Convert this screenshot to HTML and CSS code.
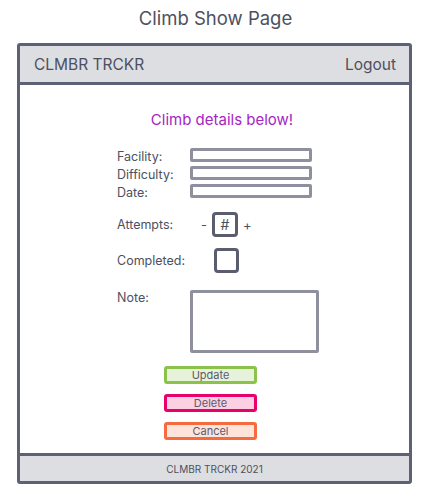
FILE: index.html
```html
<!DOCTYPE html>
<html lang="en">
  <head>
    <meta charset="UTF-8" />
    <title>Climb Show Page</title>
    <link rel="stylesheet" href="styles.css">
  </head>
  <body>
    <h1 class="page-title">Climb Show Page</h1>

    <div class="frame">
      <div class="topbar">
        <span>CLMBR TRCKR</span>
        <span>Logout</span>
      </div>

      <div class="content">
        <h2 class="intro">Climb details below!</h2>

        <div class="fields">
          <label>Facility:</label>
          <div class="input"></div>
          <label>Difficulty:</label>
          <div class="input"></div>
          <label>Date:</label>
          <div class="input"></div>
        </div>

        <div class="row attempts">
          <label>Attempts:</label>
          <div class="stepper">
            <span>-</span>
            <div class="box">#</div>
            <span>+</span>
          </div>
        </div>

        <div class="row completed">
          <label>Completed:</label>
          <div class="box check"></div>
        </div>

        <div class="row note">
          <label>Note:</label>
          <div class="textarea"></div>
        </div>

        <div class="buttons">
          <div class="btn update">Update</div>
          <div class="btn delete">Delete</div>
          <div class="btn cancel">Cancel</div>
        </div>
      </div>

      <div class="footer">CLMBR TRCKR 2021</div>
    </div>
  </body>
</html>
```

FILE: styles.css
```css
body {
  margin: 0;
  font-family: Inter, "Open Sans", sans-serif;
  color: #4d5060;
  background-color: #fff;
}
.page-title {
  margin: 7px 0 0;
  text-align: center;
  font-size: 18.5px;
  font-weight: 400;
  line-height: 23px;
}
.frame {
  margin: 13px 0 0 17px;
  width: 389px;
  height: 435px;
  border: 3px solid #5d6175;
  border-radius: 3px;
  display: flex;
  flex-direction: column;
}
.topbar {
  height: 36px;
  border-bottom: 3px solid #5d6175;
  background-color: #dddee2;
  display: flex;
  justify-content: space-between;
  align-items: center;
  padding: 0 13px 0 14px;
  font-size: 15.5px;
}
.content {
  flex: 1;
  padding-left: 97px;
}
.intro {
  margin: 25px 0 0 0;
  width: 200px;
  text-align: center;
  font-size: 15px;
  font-weight: 400;
  color: #a526c2;
  padding-left: 5px;
}
label {
  font-size: 12.5px;
}
.fields {
  margin-top: 19px;
  display: grid;
  grid-template-columns: 73px 122px;
  row-gap: 4px;
  align-items: center;
}
.fields label {
  line-height: 14px;
  position: relative;
  top: 2px;
}
.input {
  height: 8px;
  border: 3px solid #8e909e;
  border-radius: 2px;
}
.row {
  display: flex;
  align-items: center;
}
.row label {
  width: 73px;
}
.attempts {
  margin-top: 14px;
}
.stepper {
  margin-left: 11px;
  display: flex;
  align-items: center;
  gap: 5px;
  font-size: 13px;
}
.box {
  width: 19px;
  height: 19px;
  border: 3px solid #5a5d6e;
  border-radius: 4px;
  display: flex;
  align-items: center;
  justify-content: center;
  font-size: 14px;
}
.stepper .box {
  width: 20px;
}
.completed {
  margin-top: 11px;
}
.check {
  margin-left: 24px;
}
.note {
  margin-top: 17px;
  align-items: flex-start;
}
.textarea {
  width: 123px;
  height: 57px;
  border: 3px solid #8e909e;
  border-radius: 2px;
}
.buttons {
  margin-top: 13px;
  margin-left: 47px;
  display: flex;
  flex-direction: column;
  gap: 10px;
}
.btn {
  width: 87px;
  height: 12px;
  border: 3px solid;
  border-radius: 3px;
  text-align: center;
  font-size: 11px;
  line-height: 12px;
  color: #5d5a6a;
}
.update {
  border-color: #8bc34a;
  background-color: #e6f3da;
}
.delete {
  border-color: #e8006c;
  background-color: #fbd0e1;
}
.cancel {
  border-color: #f66b3e;
  background-color: #fde3da;
}
.footer {
  height: 25px;
  border-top: 3px solid #5d6175;
  background-color: #dddee2;
  display: flex;
  align-items: center;
  justify-content: center;
  font-size: 10px;
}
```
